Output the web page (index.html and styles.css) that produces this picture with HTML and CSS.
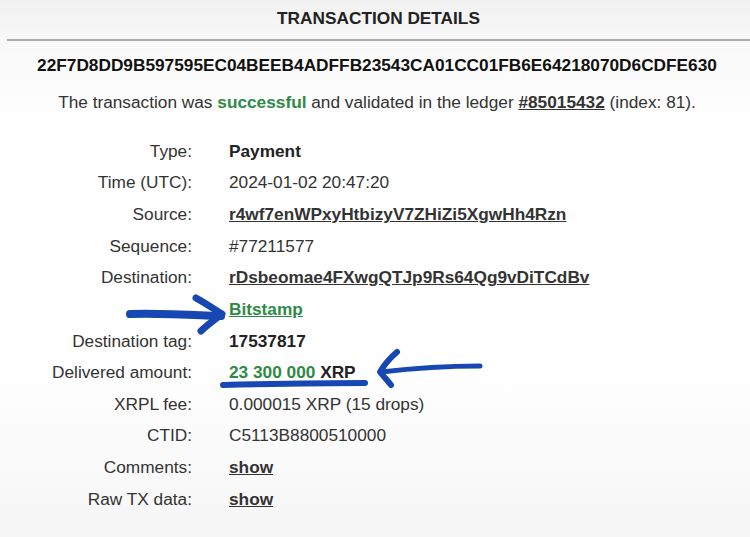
FILE: index.html
```html
<!DOCTYPE html>
<html>
<head>
<meta charset="utf-8">
<link rel="stylesheet" href="styles.css">
</head>
<body>
<div class="page">
  <div class="header">TRANSACTION DETAILS</div>
  <div class="hash">22F7D8DD9B597595EC04BEEB4ADFFB23543CA01CC01FB6E64218070D6CDFE630</div>
  <div class="status">The transaction was <span class="green bold">successful</span> and validated in the ledger <a class="link">#85015432</a> (index: 81).</div>
  <div class="details">
    <div class="label">Type:</div><div class="value bold">Payment</div>
    <div class="label">Time (UTC):</div><div class="value">2024-01-02 20:47:20</div>
    <div class="label">Source:</div><div class="value"><a class="link">r4wf7enWPxyHtbizyV7ZHiZi5XgwHh4Rzn</a></div>
    <div class="label">Sequence:</div><div class="value">#77211577</div>
    <div class="label">Destination:</div><div class="value"><a class="link">rDsbeomae4FXwgQTJp9Rs64Qg9vDiTCdBv</a></div>
    <div class="label"></div><div class="value"><a class="link green">Bitstamp</a></div>
    <div class="label">Destination tag:</div><div class="value bold">17537817</div>
    <div class="label">Delivered amount:</div><div class="value bold"><span class="green">23 300 000</span> XRP</div>
    <div class="label">XRPL fee:</div><div class="value">0.000015 XRP (15 drops)</div>
    <div class="label">CTID:</div><div class="value">C5113B8800510000</div>
    <div class="label">Comments:</div><div class="value"><a class="link">show</a></div>
    <div class="label">Raw TX data:</div><div class="value"><a class="link">show</a></div>
  </div>
  <svg class="marks" width="750" height="537" viewBox="0 0 750 537">
    <g fill="none" stroke="#1747b3" stroke-linecap="round" stroke-linejoin="round">
      <path d="M130 314 C160 313 195 315 221 316" stroke-width="8"/>
      <path d="M196 298 C205 303 214 309 222 314 C214 320 206 326 201 331" stroke-width="7"/>
      <path d="M480 366 C450 366 415 368 381 372" stroke-width="5"/>
      <path d="M397 352 C390 358 384 365 380 372 C384 377 388 381 391 385" stroke-width="6"/>
      <path d="M223 385 C270 384 320 383 365 383" stroke-width="6"/>
    </g>
  </svg>
</div>
</body>
</html>
```
FILE: styles.css
```css
html, body {
  margin: 0;
  padding: 0;
}
body {
  width: 750px;
  height: 537px;
  overflow: hidden;
  font-family: "Liberation Sans", Arial, sans-serif;
  font-size: 17.25px;
  color: #333;
  background: linear-gradient(to bottom, #f1f1f1 0px, #fbfbfb 60px, #ffffff 140px, #ffffff 360px, #f6f6f6 537px);
}
.page {
  position: relative;
  width: 750px;
  height: 537px;
}
.header {
  margin-left: 7px;
  padding-top: 8px;
  height: 31px;
  line-height: 20px;
  text-align: center;
  font-weight: bold;
  color: #222;
  border-bottom: 2px solid #acacac;
}
.hash {
  margin-top: 14px;
  padding-left: 4px;
  line-height: 20px;
  text-align: center;
  font-weight: bold;
  color: #111;
}
.status {
  margin-top: 17px;
  padding-left: 4px;
  line-height: 20px;
  text-align: center;
}
.bold {
  font-weight: bold;
}
.green {
  color: #2e8b46;
}
.link {
  font-weight: bold;
  text-decoration: underline;
  color: #333;
}
.link.green {
  color: #2e8b46;
}
.details {
  margin-top: 23px;
  display: grid;
  grid-template-columns: 192px auto;
  column-gap: 37px;
  grid-auto-rows: 31.64px;
  align-items: center;
}
.label {
  text-align: right;
  line-height: 20px;
}
.value {
  line-height: 20px;
  white-space: nowrap;
}
.value.bold {
  color: #222;
}
.marks {
  position: absolute;
  left: 0;
  top: 0;
  pointer-events: none;
}
```
